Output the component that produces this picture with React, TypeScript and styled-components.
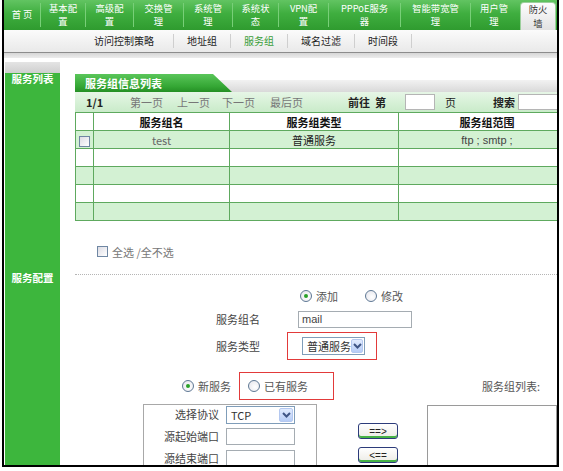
import React from 'react';
import styled, { createGlobalStyle } from 'styled-components';

const GlobalStyle = createGlobalStyle`
  html, body {
    margin: 0;
    padding: 0;
    background: #fff;
  }
  body {
    font-family: "Noto Sans CJK SC", "Noto Sans", sans-serif;
    font-size: 11px;
    color: #222;
  }
  * {
    box-sizing: border-box;
  }
`;

const NAV_ITEMS: { lines: string[]; w: number }[] = [
  { lines: ['首 页'], w: 36 },
  { lines: ['基本配', '置'], w: 45 },
  { lines: ['高级配', '置'], w: 48 },
  { lines: ['交换管', '理'], w: 50 },
  { lines: ['系统管', '理'], w: 49 },
  { lines: ['系统状', '态'], w: 46 },
  { lines: ['VPN配', '置'], w: 50 },
  { lines: ['PPPoE服务', '器'], w: 72 },
  { lines: ['智能带宽管', '理'], w: 70 },
  { lines: ['用户管', '理'], w: 47 },
];

const SUB_ITEMS = ['访问控制策略', '地址组', '服务组', '域名过滤', '时间段'];

const ROWS = [
  { name: 'test', type: '普通服务', range: 'ftp ; smtp ;' },
  null,
  null,
  null,
  null,
];

function Chevron() {
  return (
    <svg width='9' height='6' viewBox='0 0 9 6'>
      <path d='M1 1 L4.5 4.5 L8 1' stroke='#3f5585' strokeWidth='2' fill='none' />
    </svg>
  );
}

function App() {
  return (
    <>
      <GlobalStyle />
      <Frame>
        <TopNav>
          {NAV_ITEMS.map((item) => (
            <NavItem key={item.lines[0]} $w={item.w}>
              {item.lines.map((line) => (
                <NavLine key={line}>{line}</NavLine>
              ))}
            </NavItem>
          ))}
          <NavActive>
            <NavLine>防火</NavLine>
            <NavLine>墙</NavLine>
          </NavActive>
        </TopNav>

        <SubNav>
          {SUB_ITEMS.map((label) => (
            <SubItem key={label} $active={label === '服务组'}>
              {label}
            </SubItem>
          ))}
        </SubNav>
        <SubShadow />

        <Body>
          <SideCap />
          <div />

          <SideLabel>服务列表</SideLabel>
          <ListMain>
            <TabBar>
              <Tab>服务组信息列表</Tab>
            </TabBar>
            <Pager>
              <PagerCell $w={44} $strong>1/1</PagerCell>
              <PagerCell $w={47} $muted>第一页</PagerCell>
              <PagerCell $w={45} $muted>上一页</PagerCell>
              <PagerCell $w={48} $muted>下一页</PagerCell>
              <PagerCell $w={78} $muted>最后页</PagerCell>
              <PagerCell $w={57} $strong>前往&nbsp;&nbsp;第</PagerCell>
              <PagerInput $w={30} />
              <PagerCell $w={58} $pl={10}>页</PagerCell>
              <PagerCell $w={25} $strong>搜索</PagerCell>
              <PagerInput $w={40} />
            </Pager>
            <Table>
              <colgroup>
                <col style={{ width: 18 }} />
                <col style={{ width: 136 }} />
                <col style={{ width: 169 }} />
                <col style={{ width: 177 }} />
              </colgroup>
              <thead>
                <tr>
                  <th />
                  <th>服务组名</th>
                  <th>服务组类型</th>
                  <th>服务组范围</th>
                </tr>
              </thead>
              <tbody>
                {ROWS.map((row, i) => (
                  <TableRow key={i} $alt={i % 2 === 0}>
                    <td>{row && <Checkbox />}</td>
                    <NameCell>{row?.name}</NameCell>
                    <td>{row?.type}</td>
                    <RangeCell>{row?.range}</RangeCell>
                  </TableRow>
                ))}
              </tbody>
            </Table>
            <SelectAll>
              <Checkbox />
              <span>全选 /全不选</span>
            </SelectAll>
          </ListMain>

          <SideLabel>服务配置</SideLabel>
          <ConfigMain>
            <TopForm>
              <span />
              <RadioRow>
                <RadioOption>
                  <Radio $checked />
                  添加
                </RadioOption>
                <RadioOption $ml={27}>
                  <Radio />
                  修改
                </RadioOption>
              </RadioRow>

              <FieldLabel>服务组名</FieldLabel>
              <TextBox $w={114} defaultValue='mail' readOnly />

              <FieldLabel>服务类型</FieldLabel>
              <Highlight $w={90} $ml={-11} $pl={14}>
                <Select $w={63}>
                  普通服务
                  <SelectArrow>
                    <Chevron />
                  </SelectArrow>
                </Select>
              </Highlight>
            </TopForm>

            <Lower>
              <NewRow>
                <RadioOption>
                  <Radio $checked />
                  新服务
                </RadioOption>
                <Highlight $w={95} $ml={8} $pl={8}>
                  <RadioOption>
                    <Radio />
                    已有服务
                  </RadioOption>
                </Highlight>
              </NewRow>
              <ListTitle>服务组列表:</ListTitle>

              <ProtoBox>
                <FieldLabel $small>选择协议</FieldLabel>
                <Select $w={69}>
                  TCP
                  <SelectArrow>
                    <Chevron />
                  </SelectArrow>
                </Select>
                <FieldLabel $small>源起始端口</FieldLabel>
                <TextBox $w={69} readOnly />
                <FieldLabel $small>源结束端口</FieldLabel>
                <TextBox $w={69} readOnly />
              </ProtoBox>

              <MoveButtons>
                <MoveButton>==&gt;</MoveButton>
                <MoveButton>&lt;==</MoveButton>
              </MoveButtons>

              <GroupList />
            </Lower>
          </ConfigMain>
        </Body>
      </Frame>
    </>
  );
}

const Frame = styled.div`
  margin-left: 2px;
  width: 557px;
  height: 467px;
  border: 2px solid #000;
  border-top: none;
  overflow: hidden;
`;

const TopNav = styled.nav`
  display: flex;
  height: 30px;
  background: linear-gradient(#62c462, #3fae3f 45%, #2f9b2f);
`;

const NavLine = styled.span`
  display: block;
  height: 13.5px;
  line-height: 13.5px;
`;

const NavItem = styled.div<{ $w: number }>`
  width: ${(p) => p.$w}px;
  display: flex;
  flex-direction: column;
  align-items: center;
  justify-content: center;
  font-size: 9.3px;
  color: #fff;
  white-space: nowrap;

  & + & {
    border-left: 1px solid #78cf78;
    margin: 3px 0;
  }
`;

const NavActive = styled.div`
  margin: 2px 0 0 3px;
  width: 36px;
  display: flex;
  flex-direction: column;
  align-items: center;
  justify-content: center;
  font-size: 9.3px;
  color: #333;
  background: linear-gradient(#fdfdfd, #e2e2e2);
  border: 1px solid #9ccf9c;
  border-bottom: none;
  border-radius: 4px 4px 0 0;
`;

const SubNav = styled.div`
  display: flex;
  align-items: center;
  height: 23px;
  padding-left: 77px;
  background: linear-gradient(#fbfbfb, #e9e9e9);
  border-bottom: 1px solid #8c8c8c;
`;

const SubItem = styled.span<{ $active?: boolean }>`
  font-size: 10px;
  line-height: 14px;
  padding: 0 13px;
  color: ${(p) => (p.$active ? '#3a9e3a' : '#1e1e1e')};
  border-right: 1px solid #cfcfcf;

  &:first-child {
    padding-right: 19px;
  }
`;

const SubShadow = styled.div`
  height: 5px;
  background: linear-gradient(#d6d6d6, #ececec);
`;

const Body = styled.div`
  display: grid;
  grid-template-columns: 56px 1fr;
`;

const SideCap = styled.div`
  margin: 4px 0 0 1px;
  height: 11px;
  background: linear-gradient(#e4e4e4, #cfcfcf);
`;

const SideLabel = styled.div`
  margin-left: 1px;
  background: #3db63d;
  color: #fff;
  font-weight: bold;
  font-size: 10.5px;
  line-height: 12px;
  text-align: center;
`;

const ListMain = styled.div`
  min-width: 0;
  overflow: hidden;
  padding: 1px 0 14px 15px;
`;

const TabBar = styled.div`
  height: 18px;
  background: linear-gradient(transparent 6px, #f2f2f2 6px, #d9d9d9);
`;

const Tab = styled.div`
  width: 157px;
  height: 18px;
  padding-left: 10px;
  font-size: 11px;
  line-height: 18px;
  font-weight: bold;
  color: #fff;
  background: linear-gradient(#5ac65a, #34a634 70%, #258f25);
  clip-path: polygon(0 0, 138px 0, 100% 100%, 0 100%);
`;

const Pager = styled.div`
  display: flex;
  align-items: center;
  height: 20px;
  width: 500px;
  padding-left: 11px;
  background: linear-gradient(#e6f6e6, #c9ebc9);
`;

const PagerCell = styled.span<{ $w: number; $muted?: boolean; $strong?: boolean; $pl?: number }>`
  flex: none;
  width: ${(p) => p.$w}px;
  padding-left: ${(p) => p.$pl ?? 0}px;
  font-size: 11px;
  white-space: nowrap;
  color: ${(p) => (p.$muted ? '#777' : '#222')};
  font-weight: ${(p) => (p.$strong ? 'bold' : 'normal')};
`;

const PagerInput = styled.span<{ $w: number }>`
  flex: none;
  width: ${(p) => p.$w}px;
  height: 16px;
  background: #fff;
  border: 1px solid #b5b5b5;
`;

const Table = styled.table`
  border-collapse: collapse;
  table-layout: fixed;
  width: 500px;
  font-size: 11px;

  th,
  td {
    border: 1px solid #5ea95e;
    height: 18px;
    padding: 0;
    line-height: 14px;
    text-align: center;
  }

  th {
    background: #fff;
    font-weight: bold;
    color: #111;
  }
`;

const TableRow = styled.tr<{ $alt: boolean }>`
  background: ${(p) => (p.$alt ? '#d3f1d3' : '#fff')};
`;

const NameCell = styled.td`
  color: #666;
`;

const RangeCell = styled.td`
  color: #444;
  font-family: "Liberation Sans", sans-serif;
`;

const Checkbox = styled.span`
  display: inline-block;
  vertical-align: middle;
  width: 11px;
  height: 11px;
  border: 1px solid #6f87a3;
  background: linear-gradient(135deg, #dcdce4, #fff);
`;

const SelectAll = styled.div`
  display: flex;
  align-items: center;
  gap: 4px;
  height: 13px;
  margin: 24px 0 0 22px;
  color: #777;
  font-size: 11px;
`;

const ConfigMain = styled.div`
  min-width: 0;
  overflow: hidden;
  margin: 2px 0 0 15px;
  padding-top: 10px;
  border-top: 1px dotted #b5b5b5;
`;

const TopForm = styled.div`
  display: grid;
  grid-template-columns: 185px 1fr;
  grid-template-rows: 22px 24px 29px;
  column-gap: 38px;
  align-items: center;
`;

const FieldLabel = styled.span<{ $small?: boolean }>`
  text-align: right;
  font-size: 11px;
  line-height: ${(p) => (p.$small ? '16px' : '14px')};
  color: #444;
  white-space: nowrap;
`;

const RadioRow = styled.div`
  display: flex;
  align-items: center;
  padding-left: 2px;
`;

const RadioOption = styled.label<{ $ml?: number }>`
  display: flex;
  align-items: center;
  gap: 4px;
  margin-left: ${(p) => p.$ml ?? 0}px;
  font-size: 11px;
  color: #555;
  white-space: nowrap;
`;

const Radio = styled.span<{ $checked?: boolean }>`
  position: relative;
  display: inline-block;
  width: 12px;
  height: 12px;
  border-radius: 50%;
  border: 1px solid #5e7894;
  background: radial-gradient(circle at 60% 60%, #fff, #e3e3ea);

  &::after {
    content: '';
    display: ${(p) => (p.$checked ? 'block' : 'none')};
    position: absolute;
    left: 3px;
    top: 3px;
    width: 4px;
    height: 4px;
    border-radius: 50%;
    background: #29a129;
  }
`;

const TextBox = styled.input<{ $w: number }>`
  width: ${(p) => p.$w}px;
  height: 17px;
  padding: 0 3px;
  border: 1px solid #a5acb2;
  font-family: "Liberation Sans", sans-serif;
  font-size: 11px;
  color: #444;
  outline: none;
`;

const Highlight = styled.div<{ $w: number; $ml: number; $pl: number }>`
  display: flex;
  align-items: center;
  width: ${(p) => p.$w}px;
  height: 28px;
  margin-left: ${(p) => p.$ml}px;
  padding-left: ${(p) => p.$pl}px;
  border: 1.5px solid #e23a3a;
`;

const Select = styled.div<{ $w: number }>`
  display: flex;
  align-items: center;
  width: ${(p) => p.$w}px;
  height: 18px;
  padding-left: 4px;
  border: 1px solid #7f9db9;
  background: #fff;
  font-size: 11px;
  color: #333;
  white-space: nowrap;
`;

const SelectArrow = styled.span`
  margin-left: auto;
  margin-right: 1px;
  width: 14px;
  height: 14px;
  display: flex;
  align-items: center;
  justify-content: center;
  border: 1px solid #b4c8f0;
  border-radius: 2px;
  background: linear-gradient(#e1ebfe, #b6ccf6);
`;

const Lower = styled.div`
  display: grid;
  grid-template-columns: 174px 110px 1fr;
  grid-template-rows: 27px auto;
  row-gap: 5px;
  margin: 12px 0 0 68px;
`;

const NewRow = styled.div`
  grid-column: 1 / 3;
  display: flex;
  align-items: center;
  padding-left: 39px;
`;

const ListTitle = styled.span`
  align-self: center;
  text-align: right;
  padding-right: 17px;
  font-size: 11px;
  color: #555;
`;

const ProtoBox = styled.div`
  display: grid;
  grid-template-columns: 75px 69px;
  grid-auto-rows: 22px;
  column-gap: 7px;
  align-items: start;
  padding: 1px 0 40px;
  border: 1px solid #a8a8a8;
`;

const MoveButtons = styled.div`
  display: flex;
  flex-direction: column;
  gap: 8px;
  padding: 19px 0 0 41px;
`;

const MoveButton = styled.button`
  width: 40px;
  height: 16px;
  padding: 0;
  font-family: "Liberation Sans", sans-serif;
  font-size: 10px;
  color: #222;
  border: 1px solid #2c3b7a;
  border-radius: 3px;
  background: linear-gradient(#ffffff, #ecebe5);
  box-shadow: inset 0 -2px 0 #46b246;
`;

const GroupList = styled.div`
  margin-top: 1px;
  height: 90px;
  border: 1px solid #9a9a9a;
  background: #fff;
`;

export default App;
